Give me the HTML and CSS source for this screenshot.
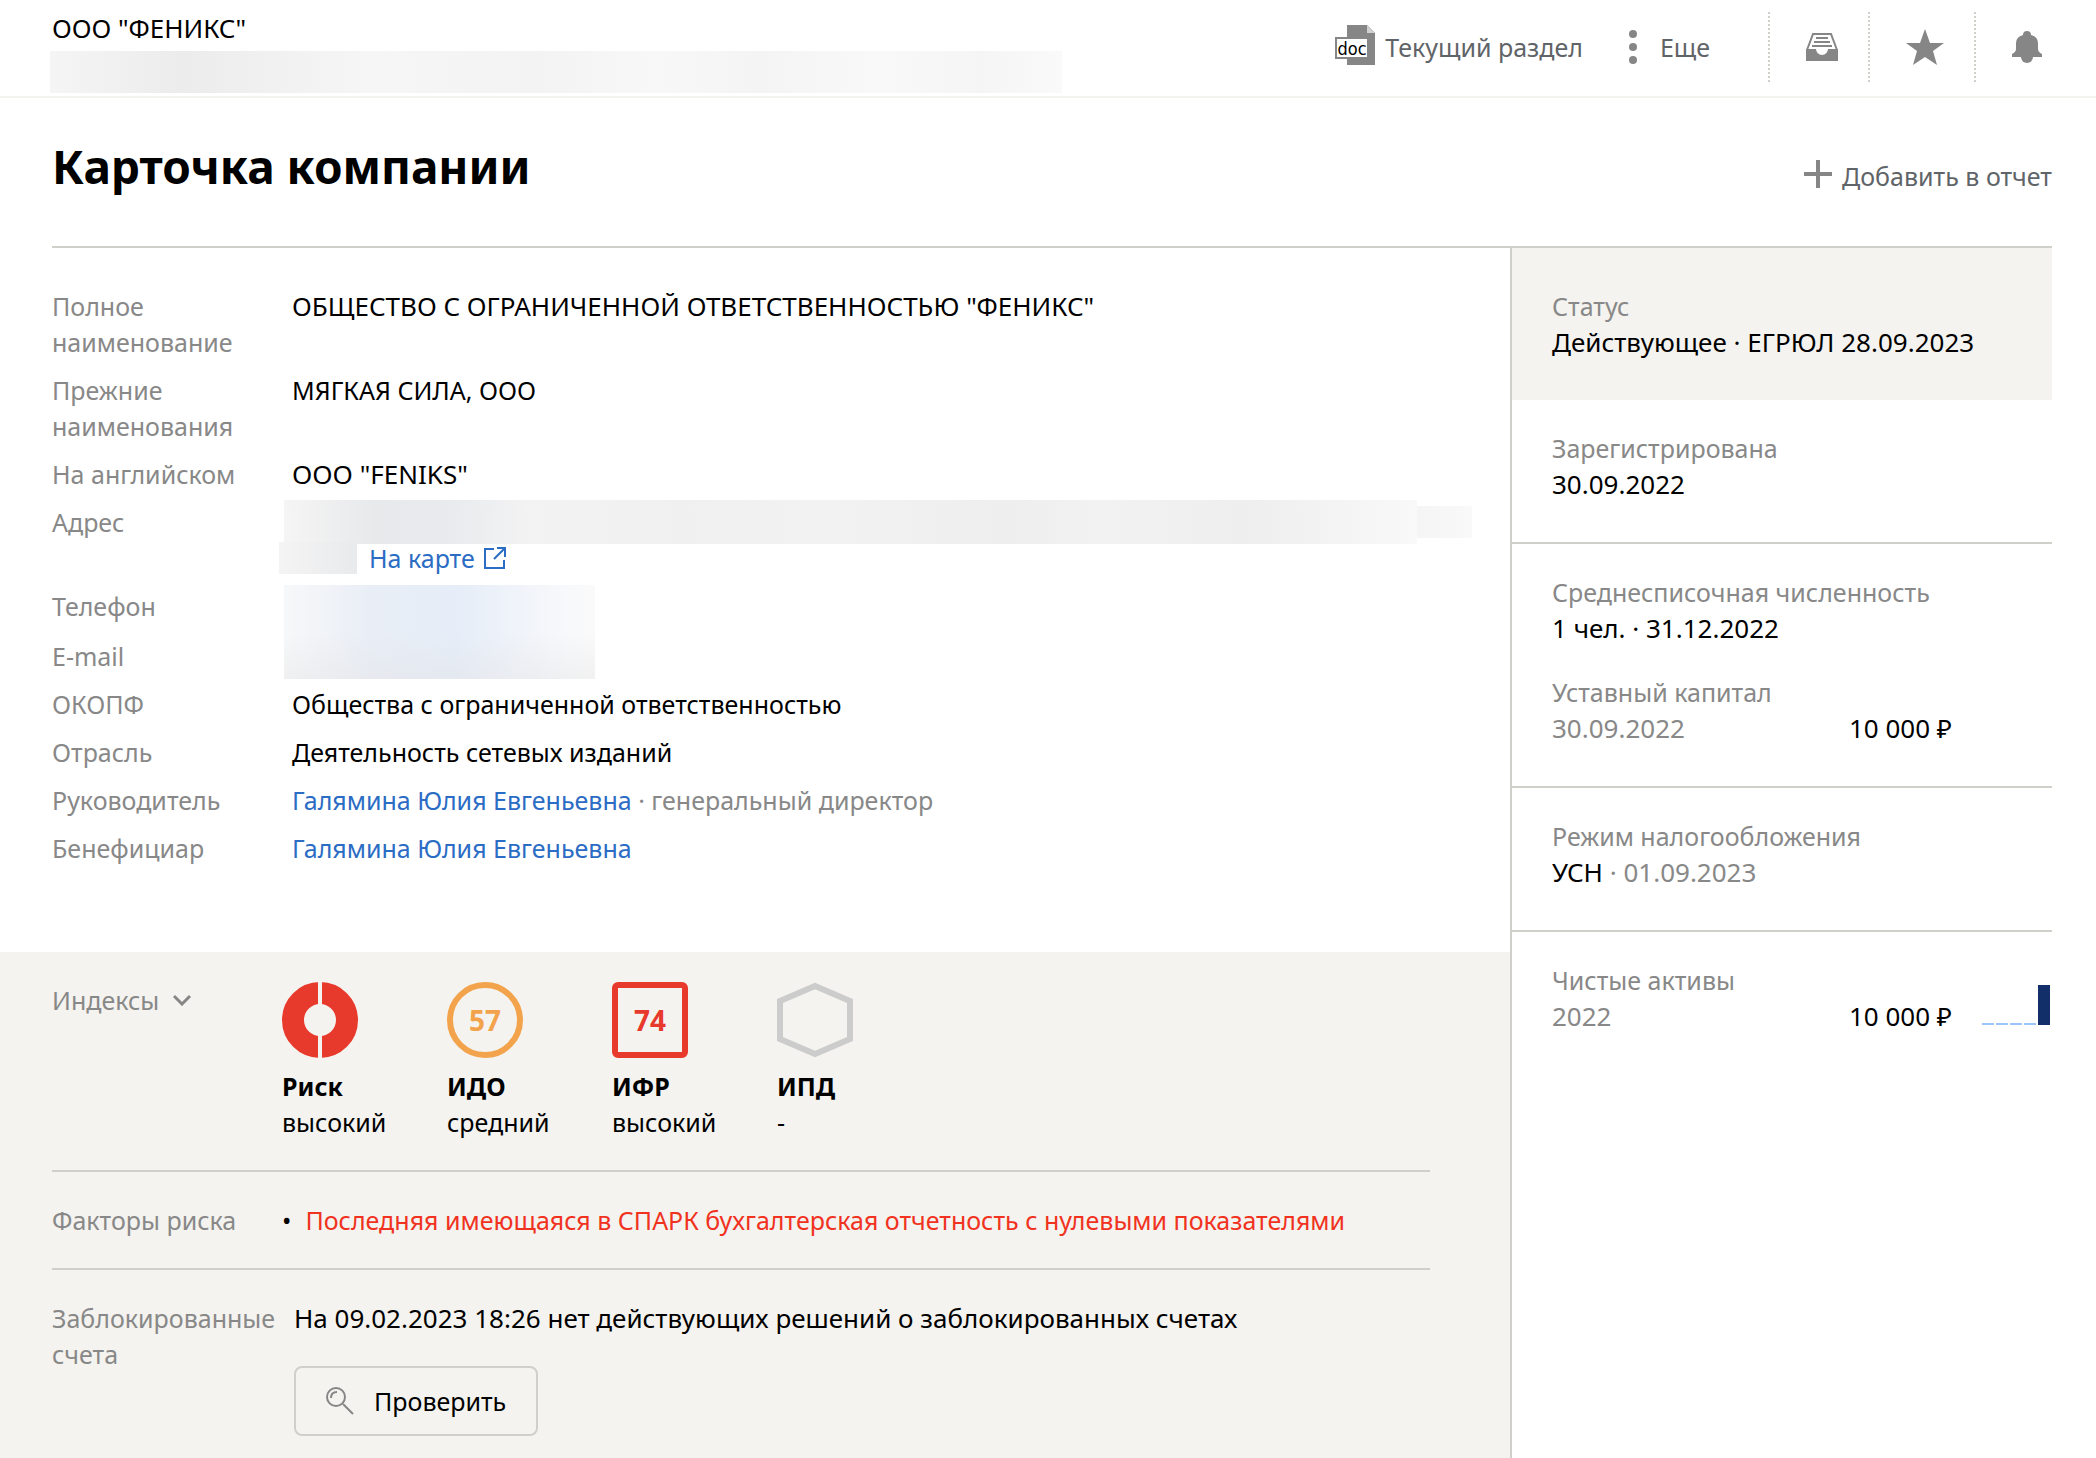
FILE: index.html
```html
<!DOCTYPE html>
<html lang="ru">
<head>
<meta charset="utf-8">
<meta name="viewport" content="width=device-width, initial-scale=1">
<title>Карточка компании</title>
<link rel="stylesheet" href="styles.css">
</head>
<body>
<header class="topbar">
  <div class="topbar-company">
    <div class="value">ООО "ФЕНИКС"</div>
    <div class="redacted redacted-subtitle"></div>
  </div>
  <nav class="topbar-nav">
    <button class="tool tool-doc" type="button">
      <svg width="40" height="40" viewBox="0 0 40 40" aria-hidden="true">
        <path fill="#868686" d="M12 0h20l8 8v32H12z"/>
        <path fill="#d0d0d0" d="M32 0l8 8h-8z"/>
        <path fill="#fff" stroke="#868686" stroke-width="2" d="M1 13h32v20H1z"/>
        <text class="doc-text" x="17" y="30" text-anchor="middle">doc</text>
      </svg>
      Текущий раздел
    </button>
    <button class="tool tool-more" type="button">
      <svg width="8" height="34" viewBox="0 0 8 34" fill="#868686" aria-hidden="true">
        <circle cx="4" cy="4" r="4"/><circle cx="4" cy="17" r="4"/><circle cx="4" cy="30" r="4"/>
      </svg>
      Еще
    </button>
    <button class="icon-button" type="button" aria-label="Архив">
      <svg width="32" height="28" viewBox="0 0 32 28" aria-hidden="true">
        <path fill="none" stroke="#868686" stroke-width="2" d="M1 17L7 1h18l6 16"/>
        <path fill="#868686" d="M10 4h12v2H10zM8 8h16v2H8zM6 12h20v2H6zM0 16h10a6 6 0 0 0 12 0h10v12H0z"/>
      </svg>
    </button>
    <button class="icon-button" type="button" aria-label="Избранное">
      <svg width="38" height="36" viewBox="0 0 38 36" aria-hidden="true">
        <path fill="#868686" d="M19 0l5 14h14L27 22l4 14-12-8-12 8 4-14L0 14h14z"/>
      </svg>
    </button>
    <button class="icon-button" type="button" aria-label="Уведомления">
      <svg width="30" height="32" viewBox="0 0 30 32" fill="#868686" aria-hidden="true">
        <path d="M11 4a4 4 0 0 1 8 0q7 2 7 8v6q0 3 4 5v3H0v-3q4-2 4-5v-6q0-6 7-8z"/>
        <path d="M9 26h12a6 6 0 0 1-12 0z"/>
      </svg>
    </button>
  </nav>
</header>

<div class="page-head">
  <h1>Карточка компании</h1>
  <button class="tool tool-add" type="button">
    <svg width="28" height="32" viewBox="0 0 28 32" fill="#868686" aria-hidden="true"><path d="M12 0h4v12h12v4H16v12h-4V16H0v-4h12z"/></svg>
    Добавить в отчет
  </button>
</div>

<main class="card">
  <div class="card-main">
    <dl class="details">
      <dt>Полное наименование</dt><dd class="value">ОБЩЕСТВО С ОГРАНИЧЕННОЙ ОТВЕТСТВЕННОСТЬЮ "ФЕНИКС"</dd>
      <dt>Прежние наименования</dt><dd>МЯГКАЯ СИЛА, ООО</dd>
      <dt>На английском</dt><dd class="value">OOO "FENIKS"</dd>
      <dt>Адрес</dt>
      <dd class="address">
        <div class="address-line"><span class="redacted redacted-address"></span><span class="redacted redacted-tail"></span></div>
        <div class="address-line">
          <span class="redacted redacted-room"></span>
          <a class="map-link" href="#map">На карте
            <svg width="24" height="24" viewBox="0 0 24 24" fill="none" stroke="#2b6cc4" stroke-width="2" aria-hidden="true"><path d="M11 3H2v19h19v-8M14 2h8v9M22 2L11 13"/></svg>
          </a>
        </div>
      </dd>
      <dt>Телефон</dt><dd class="contacts"><div class="redacted redacted-contacts"></div></dd>
      <dt class="email">E-mail</dt>
      <dt>ОКОПФ</dt><dd>Общества с ограниченной ответственностью</dd>
      <dt>Отрасль</dt><dd>Деятельность сетевых изданий</dd>
      <dt>Руководитель</dt><dd><a href="#head">Галямина Юлия Евгеньевна</a> <span class="muted">· генеральный директор</span></dd>
      <dt>Бенефициар</dt><dd><a href="#owner">Галямина Юлия Евгеньевна</a></dd>
    </dl>

    <div class="analysis">
      <section class="analysis-row analysis-indexes">
        <button class="index-toggle" type="button">Индексы
          <svg width="18" height="12" viewBox="0 0 18 12" fill="none" stroke="#868686" stroke-width="3" aria-hidden="true"><path d="M1 2l8 8 8-8"/></svg>
        </button>
        <ul class="indexes">
          <li>
            <svg width="76" height="76" viewBox="0 0 76 76" aria-hidden="true">
              <circle cx="38" cy="38" r="27" fill="none" stroke="#e8392d" stroke-width="22"/>
              <path fill="#f4f3ef" d="M36 0h4v24h-4zM36 52h4v24h-4z"/>
            </svg>
            <b>Риск</b>высокий
          </li>
          <li><div class="score score-medium">57</div><b>ИДО</b>средний</li>
          <li><div class="score score-high">74</div><b>ИФР</b>высокий</li>
          <li>
            <svg width="76" height="76" viewBox="0 0 76 76" aria-hidden="true"><path fill="none" stroke="#ccc" stroke-width="6" d="M38 4l35 15v38L38 72 3 57V19z"/></svg>
            <b>ИПД</b>-
          </li>
        </ul>
      </section>
      <section class="analysis-row">
        <h2>Факторы риска</h2>
        <ul class="factors"><li>Последняя имеющаяся в СПАРК бухгалтерская отчетность с нулевыми показателями</li></ul>
      </section>
      <section class="analysis-row">
        <h2>Заблокированные счета</h2>
        <div class="blocked">
          <p class="value">На 09.02.2023 18:26 нет действующих решений о заблокированных счетах</p>
          <button class="check-button" type="button">
            <svg width="28" height="28" viewBox="0 0 28 28" fill="none" stroke="#868686" stroke-width="2" aria-hidden="true"><circle cx="10" cy="10" r="9"/><path d="M5 11q0-6 6-6M17 17l10 10"/></svg>
            Проверить
          </button>
        </div>
      </section>
    </div>
  </div>

  <aside class="summary">
    <section class="summary-block summary-status">
      <div><h3>Статус</h3><p>Действующее · ЕГРЮЛ 28.09.2023</p></div>
    </section>
    <section class="summary-block">
      <div><h3>Зарегистрирована</h3><p>30.09.2022</p></div>
    </section>
    <section class="summary-block">
      <div><h3>Среднесписочная численность</h3><p>1 чел. · 31.12.2022</p></div>
      <div><h3>Уставный капитал</h3><p class="amount-row"><span class="muted">30.09.2022</span><span>10 000 ₽</span></p></div>
    </section>
    <section class="summary-block">
      <div><h3>Режим налогообложения</h3><p>УСН <span class="muted">· 01.09.2023</span></p></div>
    </section>
    <section class="summary-block">
      <div>
        <h3>Чистые активы</h3>
        <div class="amount-row">
          <span class="muted">2022</span><span>10 000 ₽</span>
          <div class="bars"><i></i><i></i><i></i><i></i><i class="bar-full"></i></div>
        </div>
      </div>
    </section>
  </aside>
</main>
</body>
</html>
```
FILE: styles.css
```css
* { box-sizing: border-box; }

body {
  margin: 0;
  min-height: 100vh;
  display: flex;
  flex-direction: column;
  background: #fff;
  color: #000;
  font-family: "Noto Sans", "Open Sans", sans-serif;
  font-size: 25px;
  line-height: 36px;
}

h1, h2, h3, p, dl, dd, ul { margin: 0; padding: 0; }
h2, h3 { font-size: 25px; font-weight: 400; color: #888; }
ul { list-style: none; }
svg { display: block; flex: none; }
a { color: #2b6cc4; text-decoration: none; }
button { padding: 0; border: 0; background: none; color: inherit; font: inherit; cursor: pointer; }
.muted { color: #888; }
.value { font-size: 26px; }

/* Top bar */
.topbar {
  display: flex;
  justify-content: space-between;
  align-items: flex-start;
  min-height: 98px;
  padding: 10px 24px 0 52px;
  border-bottom: 2px solid #f4f3ef;
}
.topbar-company { flex: 1; }
.topbar-nav { display: flex; align-items: center; height: 70px; margin-top: 2px; }
.tool { display: flex; align-items: center; gap: 10px; color: #5f6468; white-space: nowrap; }
.tool-doc { margin-right: 46px; }
.tool-more { gap: 23px; margin-right: 58px; }
.tool-doc svg { margin-bottom: 4px; }
.doc-text { font: 18px "DejaVu Sans Condensed", "DejaVu Sans", sans-serif; fill: #000; }
.icon-button {
  height: 70px;
  padding: 0 30px 0 36px;
  border-left: 2px dotted #d0d0ca;
}

.redacted { display: block; }
.redacted-subtitle {
  width: 82%;
  max-width: 1012px;
  height: 42px;
  margin: 5px 0 0 -2px;
  background: linear-gradient(90deg, #f5f5f5, #ececec 13%, #f6f6f6 32%, #f3f3f3 48%, #f8f8f8 60%, #f4f4f4 70%, #f9f9f9 82%, #f5f5f5 92%, #fafafa);
}

/* Page heading */
.page-head {
  display: flex;
  justify-content: space-between;
  align-items: center;
  margin: 0 44px 0 52px;
  padding: 38px 0 50px;
  border-bottom: 2px solid #d0d0ca;
}
h1 { font-size: 46px; line-height: 60px; }
.tool-add { margin-top: 20px; }

/* Company card */
.card {
  flex: 1;
  display: grid;
  grid-template-columns: minmax(0, 1fr) 542px;
  padding-right: 44px;
}
.card-main { display: flex; flex-direction: column; }
.details {
  display: grid;
  grid-template-columns: 240px minmax(0, 1fr);
  row-gap: 12px;
  padding: 40px 38px 86px 52px;
}
.details dt { color: #888; padding-right: 40px; }
.details dt.email { padding-top: 2px; }
.contacts { grid-row: span 2; }

.address-line { display: flex; align-items: center; height: 36px; }
.redacted-address {
  flex: 1;
  height: 44px;
  margin-left: -8px;
  background: linear-gradient(90deg, #f5f5f5, #e8e9eb 8%, #e8eaed 14%, #f3f3f3 22%, #f0f0f0 35%, #f2f2f2 48%, #eee 64%, #f2f2f2 72%, #eee 85%, #f9f9f9);
}
.redacted-tail { width: 55px; height: 32px; background: linear-gradient(90deg, #f5f5f5, #f9f9f9); }
.redacted-room { width: 78px; height: 32px; margin-left: -13px; background: linear-gradient(90deg, #f4f4f4, #e9eaec); }
.map-link { display: flex; align-items: center; gap: 8px; margin-left: 12px; }
.redacted-contacts {
  width: 311px;
  max-width: 100%;
  height: 94px;
  margin: -3px 0 -5px -8px;
  background:
    linear-gradient(180deg, transparent 50%, rgba(225, 225, 225, .35)),
    linear-gradient(90deg, #f7f8f9, #e9eef6 28%, #e6edf8 55%, #f8f9fb 92%, #fafafa);
}

/* Indexes and risks */
.analysis { flex: 1; padding: 0 80px 22px 52px; background: #f4f3ef; }
.analysis-row {
  display: grid;
  grid-template-columns: 230px minmax(0, 1fr);
  padding: 30px 0;
}
.analysis-row + .analysis-row { border-top: 2px solid #d0d0ca; }
.index-toggle { display: flex; align-items: center; align-self: start; gap: 14px; color: #888; }
.indexes { display: flex; }
.indexes li { display: flex; flex-direction: column; width: 165px; }
.indexes b { margin-top: 10px; }
.score {
  width: 76px;
  height: 76px;
  border: 6px solid;
  font-size: 28px;
  font-weight: 700;
  line-height: 64px;
  text-align: center;
}
.score-medium { border-radius: 50%; color: #f3a34c; }
.score-high { border-radius: 6px; color: #e8392d; }
.factors li { display: flex; align-items: baseline; gap: 14px; color: #f0321e; }
.factors li::before { content: "•"; color: #000; }
.blocked { padding-left: 12px; }
.check-button {
  display: flex;
  align-items: center;
  gap: 20px;
  height: 70px;
  margin-top: 30px;
  padding: 0 30px;
  border: 2px solid #d0d0ca;
  border-radius: 8px;
}

/* Summary column */
.summary { border-left: 2px solid #d0d0ca; font-size: 26px; }
.summary-block { display: grid; gap: 28px; padding: 30px 0 40px 40px; }
.summary-block + .summary-block + .summary-block { border-top: 2px solid #d0d0ca; }
.summary-status { padding-top: 40px; background: #f4f3ef; }
.amount-row { display: flex; }
.amount-row span:first-child { width: 170px; }
.amount-row span:nth-child(2) { width: 230px; text-align: right; }
.bars { display: flex; align-items: flex-end; gap: 2px; height: 40px; margin: -13px 0 0 30px; }
.bars i { width: 12px; height: 2px; background: #9dc5fa; }
.bars .bar-full { height: 40px; background: #132f69; }
```
